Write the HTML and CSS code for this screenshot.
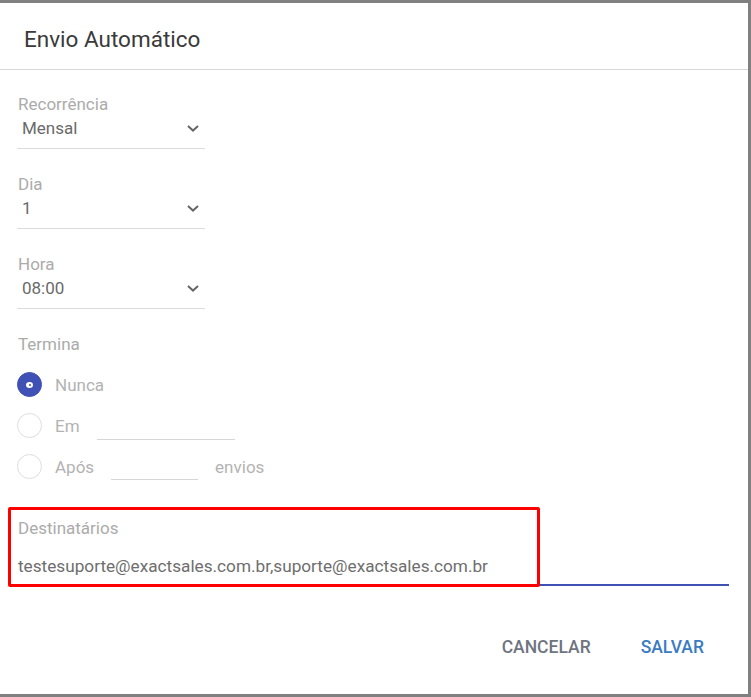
FILE: index.html
```html
<!DOCTYPE html>
<html lang="pt-BR">
<head>
<meta charset="utf-8">
<title>Envio Automático</title>
<link rel="stylesheet" href="styles.css">
</head>
<body>
<div class="frame">
  <div class="header">
    <h1 class="title">Envio Automático</h1>
  </div>
  <div class="content">
    <div class="field">
      <div class="label">Recorrência</div>
      <div class="select">
        <span class="value">Mensal</span>
        <svg class="chev" width="12" height="7" viewBox="0 0 12 7"><path d="M1 1 L6 5.6 L11 1" fill="none" stroke="#666" stroke-width="2"/></svg>
      </div>
    </div>
    <div class="field">
      <div class="label">Dia</div>
      <div class="select">
        <span class="value">1</span>
        <svg class="chev" width="12" height="7" viewBox="0 0 12 7"><path d="M1 1 L6 5.6 L11 1" fill="none" stroke="#666" stroke-width="2"/></svg>
      </div>
    </div>
    <div class="field">
      <div class="label">Hora</div>
      <div class="select">
        <span class="value">08:00</span>
        <svg class="chev" width="12" height="7" viewBox="0 0 12 7"><path d="M1 1 L6 5.6 L11 1" fill="none" stroke="#666" stroke-width="2"/></svg>
      </div>
    </div>
    <div class="group">
      <div class="label">Termina</div>
      <div class="radios">
        <div class="radio-row">
          <span class="radio checked"><span class="dot"></span></span>
          <span class="radio-label">Nunca</span>
        </div>
        <div class="radio-row">
          <span class="radio"></span>
          <span class="radio-label">Em</span>
          <span class="line-input em-input"></span>
        </div>
        <div class="radio-row">
          <span class="radio"></span>
          <span class="radio-label">Após</span>
          <span class="line-input apos-input"></span>
          <span class="radio-label suffix">envios</span>
        </div>
      </div>
    </div>
    <div class="recipients">
      <div class="label">Destinatários</div>
      <div class="email">testesuporte@exactsales.com.br,suporte@exactsales.com.br</div>
      <div class="highlight"></div>
    </div>
  </div>
  <div class="actions">
    <span class="btn cancel">CANCELAR</span>
    <span class="btn save">SALVAR</span>
  </div>
</div>
</body>
</html>
```

FILE: styles.css
```css
* { box-sizing: border-box; }
html, body { margin: 0; padding: 0; background: #fff; }
body { font-family: Roboto, "Liberation Sans", sans-serif; }

.frame {
  width: 751px;
  height: 697px;
  border-top: 3px solid #808080;
  border-right: 3px solid #808080;
  border-bottom: 3px solid #808080;
  background: #fff;
  display: flex;
  flex-direction: column;
}

.header {
  height: 67px;
  border-bottom: 1px solid #d9d9d9;
  padding: 22px 0 0 24px;
}
.title {
  margin: 0;
  font-size: 22.5px;
  font-weight: 400;
  line-height: 28px;
  color: #3a3a3a;
}

.content {
  padding: 22px 19px 0 17px;
}

.label {
  font-size: 17px;
  line-height: 24px;
  color: #ababab;
  padding-left: 1px;
}

.field {
  width: 188px;
  margin-bottom: 23px;
}
.select {
  display: flex;
  align-items: center;
  justify-content: space-between;
  height: 33px;
  padding: 0 6px 8px 5px;
  border-bottom: 1px solid #dcdcdc;
}
.value {
  font-size: 17px;
  line-height: 24px;
  color: #6a6a6a;
}
.chev { display: block; margin-top: 1px; }

.radios {
  display: flex;
  flex-direction: column;
  gap: 17px;
  margin-top: 17px;
}
.radio-row {
  display: flex;
  align-items: flex-start;
  height: 24px;
}
.radio {
  width: 25px;
  height: 25px;
  border-radius: 50%;
  border: 1px solid #dedede;
  flex: none;
  display: flex;
  align-items: center;
  justify-content: center;
  margin-top: -1px;
}
.radio.checked {
  background: #3f51b5;
  border-color: #3f51b5;
}
.dot {
  width: 7px;
  height: 6px;
  border-radius: 50%;
  background: #fff;
  display: flex;
  align-items: center;
  justify-content: center;
}
.dot::after {
  content: "";
  width: 2px;
  height: 2px;
  border-radius: 50%;
  background: #3f51b5;
}
.radio-label {
  font-size: 17px;
  line-height: 24px;
  color: #b3b3b3;
  margin-left: 13px;
}
.radio-label.suffix { margin-left: 17px; }
.line-input {
  display: block;
  border-bottom: 1px solid #d6d6d6;
  margin-left: 17px;
}
.em-input { width: 138px; height: 26px; }
.apos-input { width: 87px; height: 25px; }

.recipients {
  position: relative;
  margin-top: 37px;
  border-bottom: 2px solid #3f51b5;
  padding-bottom: 6px;
}
.recipients .label { padding-left: 1px; }
.email {
  margin-top: 14px;
  font-size: 17.2px;
  line-height: 24px;
  color: #6e6e6e;
  padding-left: 1px;
}
.highlight {
  position: absolute;
  left: -9px;
  top: -9px;
  width: 532px;
  height: 80px;
  border: 3px solid #ff0000;
  border-radius: 2px;
  pointer-events: none;
}

.actions {
  display: flex;
  justify-content: flex-end;
  align-items: center;
  gap: 50px;
  padding: 49px 44px 0 0;
}
.btn {
  font-size: 17.5px;
  font-weight: 500;
  line-height: 24px;
  letter-spacing: 0;
}
.cancel { color: #6e7480; }
.save { color: #3b7bc4; }
```
